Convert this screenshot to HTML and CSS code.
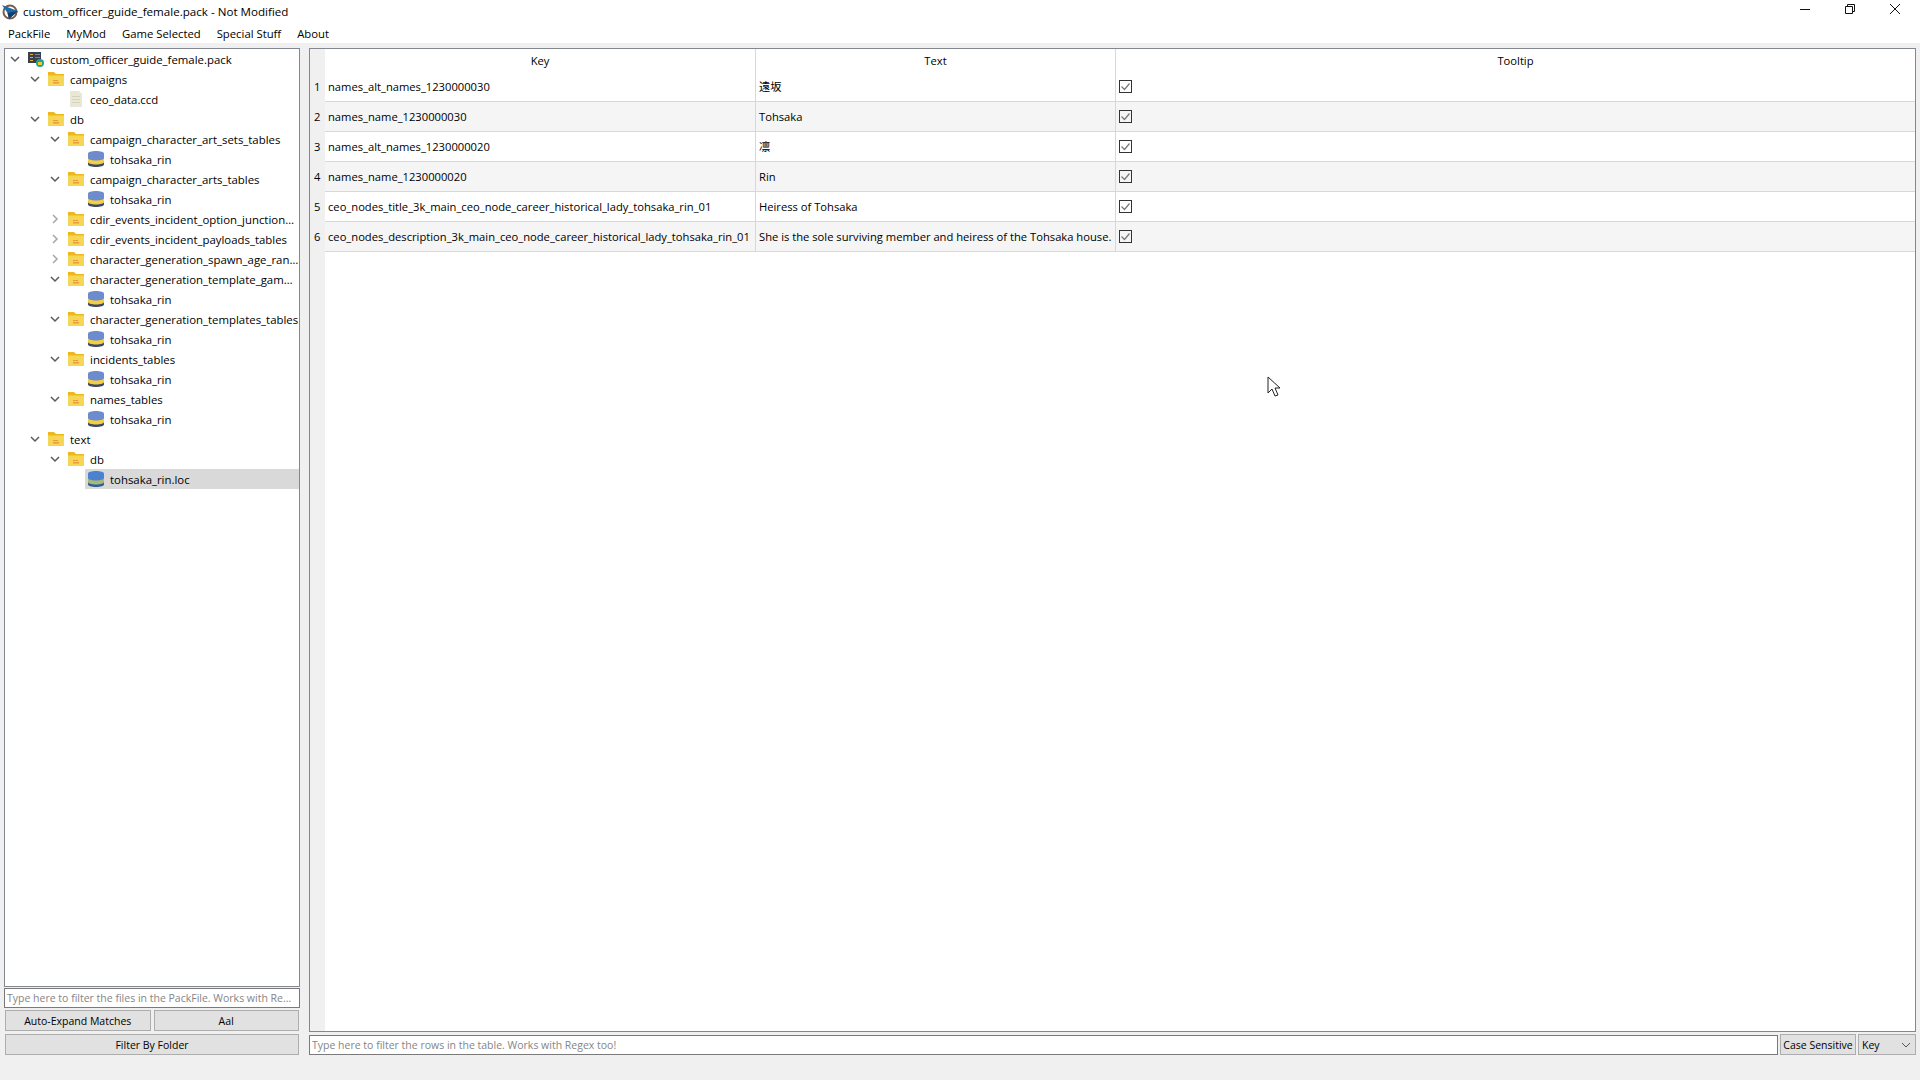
FILE: index.html
```html
<!DOCTYPE html>
<html lang="en">
<head>
    <meta charset="UTF-8">
    <title>custom_officer_guide_female.pack - Not Modified</title>
    <link rel="stylesheet" href="styles.css">
</head>
<body>
    <svg class="defs" width="0" height="0">
        <symbol id="folder" viewBox="0 0 16 16">
            <path d="M0 1h6l2 2h8v3H0z" fill="#eeb71c"/>
            <path d="M0 4.500h16V15H0z" fill="#f6d655"/>
            <path d="M5 9h5v1H5zM5 11h6v1.500H5z" fill="#eb9b3c"/>
        </symbol>
        <symbol id="db" viewBox="0 0 16 16">
            <path d="M0 11h16v2.500c0 1.500-3.500 2.500-8 2.500s-8-1-8-2.500z" fill="#3f4a62"/>
            <path d="M0 6h16v5c0 1.500-3.500 2.500-8 2.500S0 12.500 0 11z" fill="#f2cf46"/>
            <path d="M0 2.500C0 1 3.500 0 8 0s8 1 8 2.500V7c0 1.500-3.500 2.500-8 2.500S0 8.500 0 7z" fill="#6c8cce"/>
        </symbol>
        <symbol id="db-loc" viewBox="0 0 16 16">
            <path d="M0 11h16v2.500c0 1.500-3.500 2.500-8 2.500s-8-1-8-2.500z" fill="#2f5f94"/>
            <path d="M0 6h16v5c0 1.500-3.500 2.500-8 2.500S0 12.500 0 11z" fill="#a9b878"/>
            <path d="M0 2.500C0 1 3.500 0 8 0s8 1 8 2.500V7c0 1.500-3.500 2.500-8 2.500S0 8.500 0 7z" fill="#4b82cf"/>
        </symbol>
        <symbol id="file" viewBox="0 0 16 16">
            <path d="M2 0h9l3 3v13H2z" fill="#e9e7d6"/>
            <path d="M4 5h8v1H4zM4 8h8v1H4zM4 11h8v1H4z" fill="#d6d3bd"/>
        </symbol>
        <symbol id="open" viewBox="0 0 10 10">
            <path d="M1 3l4 4 4-4" fill="none" stroke="#5a5a5a" stroke-width="1.500"/>
        </symbol>
        <symbol id="closed" viewBox="0 0 10 10">
            <path d="M3 1l4 4-4 4" fill="none" stroke="#a6a6a6" stroke-width="1.500"/>
        </symbol>
        <symbol id="check" viewBox="0 0 13 13">
            <rect x="0.500" y="0.500" width="12" height="12" fill="none" stroke="#333"/>
            <path d="M2.500 6.500l3 3 5-6" fill="none" stroke="#777" stroke-width="1.200"/>
        </symbol>
    </svg>

    <header class="titlebar">
        <svg class="app-icon" width="16" height="16" viewBox="0 0 16 16">
            <circle cx="8" cy="8" r="6.500" fill="#fff" stroke="#7a5c48" stroke-width="2"/>
            <path d="M0 1l16 6-9 8-1.500-6z" fill="#1d6aab"/>
            <path d="M5.500 9L16 7l-9 8z" fill="#123e6b"/>
        </svg>
        <span class="title">custom_officer_guide_female.pack - Not Modified</span>
        <div class="win-btns">
            <svg width="10" height="10" viewBox="0 0 10 10"><path d="M0 5.500h10" stroke="#111"/></svg>
            <svg width="10" height="10" viewBox="0 0 10 10"><path d="M.5 2.500h7v7h-7zM2.500 2.500v-2h7v7h-2" fill="none" stroke="#111"/></svg>
            <svg width="10" height="10" viewBox="0 0 10 10"><path d="M0 0l10 10M10 0L0 10" stroke="#111"/></svg>
        </div>
    </header>

    <nav class="menubar">
        <span>PackFile</span>
        <span>MyMod</span>
        <span>Game Selected</span>
        <span>Special Stuff</span>
        <span>About</span>
    </nav>

    <main class="main">
        <section class="left-pane">
            <div class="tree">
                <div class="node d0">
                    <svg class="arrow"><use href="#open"/></svg>
                    <svg class="icon" width="16" height="16" viewBox="0 0 16 16">
                        <path d="M0 1h13v11H0z" fill="#36404f"/>
                        <path d="M2 3h3v1H2zM2 6h3v1H2zM2 9h3v1H2z" fill="#e0a93c"/>
                        <path d="M7 3h5v1H7zM7 6h5v1H7z" fill="#7d8794"/>
                        <circle cx="12" cy="12" r="4" fill="#1fa38e"/>
                        <path d="M10 11h4v3h-4z" fill="#f0c93a"/>
                    </svg>
                    <span>custom_officer_guide_female.pack</span>
                </div>
                <div class="node d1"><svg class="arrow"><use href="#open"/></svg><svg class="icon"><use href="#folder"/></svg><span>campaigns</span></div>
                <div class="node d2 leaf"><svg class="icon"><use href="#file"/></svg><span>ceo_data.ccd</span></div>
                <div class="node d1"><svg class="arrow"><use href="#open"/></svg><svg class="icon"><use href="#folder"/></svg><span>db</span></div>
                <div class="node d2"><svg class="arrow"><use href="#open"/></svg><svg class="icon"><use href="#folder"/></svg><span>campaign_character_art_sets_tables</span></div>
                <div class="node d3 leaf"><svg class="icon"><use href="#db"/></svg><span>tohsaka_rin</span></div>
                <div class="node d2"><svg class="arrow"><use href="#open"/></svg><svg class="icon"><use href="#folder"/></svg><span>campaign_character_arts_tables</span></div>
                <div class="node d3 leaf"><svg class="icon"><use href="#db"/></svg><span>tohsaka_rin</span></div>
                <div class="node d2"><svg class="arrow"><use href="#closed"/></svg><svg class="icon"><use href="#folder"/></svg><span>cdir_events_incident_option_junction…</span></div>
                <div class="node d2"><svg class="arrow"><use href="#closed"/></svg><svg class="icon"><use href="#folder"/></svg><span>cdir_events_incident_payloads_tables</span></div>
                <div class="node d2"><svg class="arrow"><use href="#closed"/></svg><svg class="icon"><use href="#folder"/></svg><span>character_generation_spawn_age_ran…</span></div>
                <div class="node d2"><svg class="arrow"><use href="#open"/></svg><svg class="icon"><use href="#folder"/></svg><span>character_generation_template_gam…</span></div>
                <div class="node d3 leaf"><svg class="icon"><use href="#db"/></svg><span>tohsaka_rin</span></div>
                <div class="node d2"><svg class="arrow"><use href="#open"/></svg><svg class="icon"><use href="#folder"/></svg><span>character_generation_templates_tables</span></div>
                <div class="node d3 leaf"><svg class="icon"><use href="#db"/></svg><span>tohsaka_rin</span></div>
                <div class="node d2"><svg class="arrow"><use href="#open"/></svg><svg class="icon"><use href="#folder"/></svg><span>incidents_tables</span></div>
                <div class="node d3 leaf"><svg class="icon"><use href="#db"/></svg><span>tohsaka_rin</span></div>
                <div class="node d2"><svg class="arrow"><use href="#open"/></svg><svg class="icon"><use href="#folder"/></svg><span>names_tables</span></div>
                <div class="node d3 leaf"><svg class="icon"><use href="#db"/></svg><span>tohsaka_rin</span></div>
                <div class="node d1"><svg class="arrow"><use href="#open"/></svg><svg class="icon"><use href="#folder"/></svg><span>text</span></div>
                <div class="node d2"><svg class="arrow"><use href="#open"/></svg><svg class="icon"><use href="#folder"/></svg><span>db</span></div>
                <div class="node d3 sel"><div class="selected"><svg class="icon"><use href="#db-loc"/></svg><span>tohsaka_rin.loc</span></div></div>
            </div>
            <div class="input tree-filter">Type here to filter the files in the PackFile. Works with Re…</div>
            <div class="btn-row">
                <div class="btn">Auto-Expand Matches</div>
                <div class="btn">AaI</div>
            </div>
            <div class="btn folder-btn">Filter By Folder</div>
        </section>

        <section class="right-pane">
            <div class="table">
                <div class="row head">
                    <div class="num"></div>
                    <div class="cell key">Key</div>
                    <div class="cell text">Text</div>
                    <div class="cell tip">Tooltip</div>
                </div>
                <div class="row">
                    <div class="num">1</div>
                    <div class="cell key">names_alt_names_1230000030</div>
                    <div class="cell text">遠坂</div>
                    <div class="cell tip"><svg class="check"><use href="#check"/></svg></div>
                </div>
                <div class="row alt">
                    <div class="num">2</div>
                    <div class="cell key">names_name_1230000030</div>
                    <div class="cell text">Tohsaka</div>
                    <div class="cell tip"><svg class="check"><use href="#check"/></svg></div>
                </div>
                <div class="row">
                    <div class="num">3</div>
                    <div class="cell key">names_alt_names_1230000020</div>
                    <div class="cell text">凛</div>
                    <div class="cell tip"><svg class="check"><use href="#check"/></svg></div>
                </div>
                <div class="row alt">
                    <div class="num">4</div>
                    <div class="cell key">names_name_1230000020</div>
                    <div class="cell text">Rin</div>
                    <div class="cell tip"><svg class="check"><use href="#check"/></svg></div>
                </div>
                <div class="row">
                    <div class="num">5</div>
                    <div class="cell key">ceo_nodes_title_3k_main_ceo_node_career_historical_lady_tohsaka_rin_01</div>
                    <div class="cell text">Heiress of Tohsaka</div>
                    <div class="cell tip"><svg class="check"><use href="#check"/></svg></div>
                </div>
                <div class="row alt">
                    <div class="num">6</div>
                    <div class="cell key">ceo_nodes_description_3k_main_ceo_node_career_historical_lady_tohsaka_rin_01</div>
                    <div class="cell text">She is the sole surviving member and heiress of the Tohsaka house.</div>
                    <div class="cell tip"><svg class="check"><use href="#check"/></svg></div>
                </div>
            </div>
            <div class="filter-row">
                <div class="input table-filter">Type here to filter the rows in the table. Works with Regex too!</div>
                <div class="btn case-btn">Case Sensitive</div>
                <div class="btn combo">Key<svg width="10" height="6" viewBox="0 0 10 6"><path d="M1 1l4 4 4-4" fill="none" stroke="#555"/></svg></div>
            </div>
        </section>
    </main>

    <svg class="cursor" width="14" height="22" viewBox="0 0 14 22">
        <path d="M1 1v16l4-4 3 7 3-1-3-7h5z" fill="#fff" stroke="#222"/>
    </svg>
</body>
</html>
```

FILE: styles.css
```css
* {
    box-sizing: border-box;
}

html, body {
    height: 100%;
}

body {
    margin: 0;
    background: #f0f0f0;
    color: #000;
    font-family: "Open Sans", "Noto Sans CJK JP", sans-serif;
    font-size: 11.2px;
    overflow: hidden;
}

.defs {
    display: block;
}

.titlebar {
    height: 24px;
    background: #fff;
    display: flex;
    align-items: center;
    padding: 0 0 1px 2px;
}

.title {
    margin-left: 5px;
    font-size: 11.6px;
}

.win-btns {
    margin-left: auto;
    display: flex;
    gap: 35px;
    padding: 0 20px 5px 0;
}

.menubar {
    height: 19px;
    background: #fff;
    display: flex;
    align-items: center;
    gap: 16px;
    padding-left: 8px;
    font-size: 11.3px;
}

.main {
    display: flex;
    gap: 9px;
    height: 1013px;
    padding: 5px 4px 0;
}

.left-pane {
    width: 296px;
    display: flex;
    flex-direction: column;
}

.right-pane {
    flex: 1;
    display: flex;
    flex-direction: column;
}

/* tree */
.tree {
    height: 939px;
    background: #fff;
    border: 1px solid #828790;
    font-size: 11.4px;
}

.node {
    height: 20px;
    display: flex;
    align-items: center;
    position: relative;
    white-space: nowrap;
}

.node span {
    padding-top: 1px;
}

.d0 { padding-left: 5px; }
.d1 { padding-left: 25px; }
.d2 { padding-left: 45px; }
.d3 { padding-left: 83px; }
.d2.leaf { padding-left: 63px; }
.d3.sel { padding-left: 80px; }

.arrow {
    width: 10px;
    height: 10px;
    margin-right: 8px;
    flex: none;
}

.icon {
    width: 16px;
    height: 16px;
    margin-right: 6px;
    flex: none;
}

.selected {
    flex: 1;
    height: 20px;
    background: #d9d9d9;
    display: flex;
    align-items: center;
    padding-left: 3px;
}

/* inputs and buttons */
.input {
    height: 20px;
    background: #fff;
    border: 1px solid #7a7a7a;
    color: #858585;
    font-size: 10.5px;
    line-height: 19px;
    padding-left: 2px;
    white-space: nowrap;
    overflow: hidden;
}

.tree-filter {
    margin-top: 1px;
}

.btn {
    background: #e1e1e1;
    border: 1px solid #adadad;
    font-size: 10.5px;
    display: flex;
    align-items: center;
    justify-content: center;
    white-space: nowrap;
}

.btn-row {
    display: flex;
    gap: 3px;
    margin: 2px 1px 0;
}

.btn-row .btn {
    flex: 1;
    height: 21px;
}

.folder-btn {
    height: 21px;
    margin: 3px 1px 0;
}

/* table */
.table {
    height: 984px;
    background: #fff;
    border: 1px solid #828790;
    background-image: linear-gradient(#f0f0f0, #f0f0f0);
    background-size: 15px 100%;
    background-repeat: no-repeat;
}

.row {
    height: 30px;
    display: flex;
    align-items: stretch;
}

.row.head {
    height: 23px;
}

.num {
    width: 15px;
    flex: none;
    background: #f0f0f0;
    padding: 2px 0 0 4px;
    line-height: 26px;
}

.cell {
    padding-left: 3px;
    line-height: 29px;
    border-right: 1px solid #d8d8d8;
    border-bottom: 1px solid #d8d8d8;
    white-space: nowrap;
    overflow: hidden;
}

.head .cell {
    border-bottom: none;
    text-align: center;
    line-height: 23px;
    padding-left: 0;
}

.row.alt .cell {
    background: #f5f5f5;
}

.key {
    width: 431px;
}

.text {
    width: 360px;
}

.tip {
    flex: 1;
    display: flex;
    align-items: center;
    border-right: none;
}

.head .tip {
    justify-content: center;
}

.check {
    width: 13px;
    height: 13px;
}

.filter-row {
    display: flex;
    gap: 2px;
    margin-top: 2px;
    height: 21px;
}

.table-filter {
    flex: 1;
    margin-top: 1px;
}

.case-btn {
    width: 76px;
    height: 21px;
}

.combo {
    width: 58px;
    height: 21px;
    justify-content: space-between;
    padding: 0 4px 0 3px;
}

.cursor {
    position: absolute;
    left: 1267px;
    top: 376px;
}
```
